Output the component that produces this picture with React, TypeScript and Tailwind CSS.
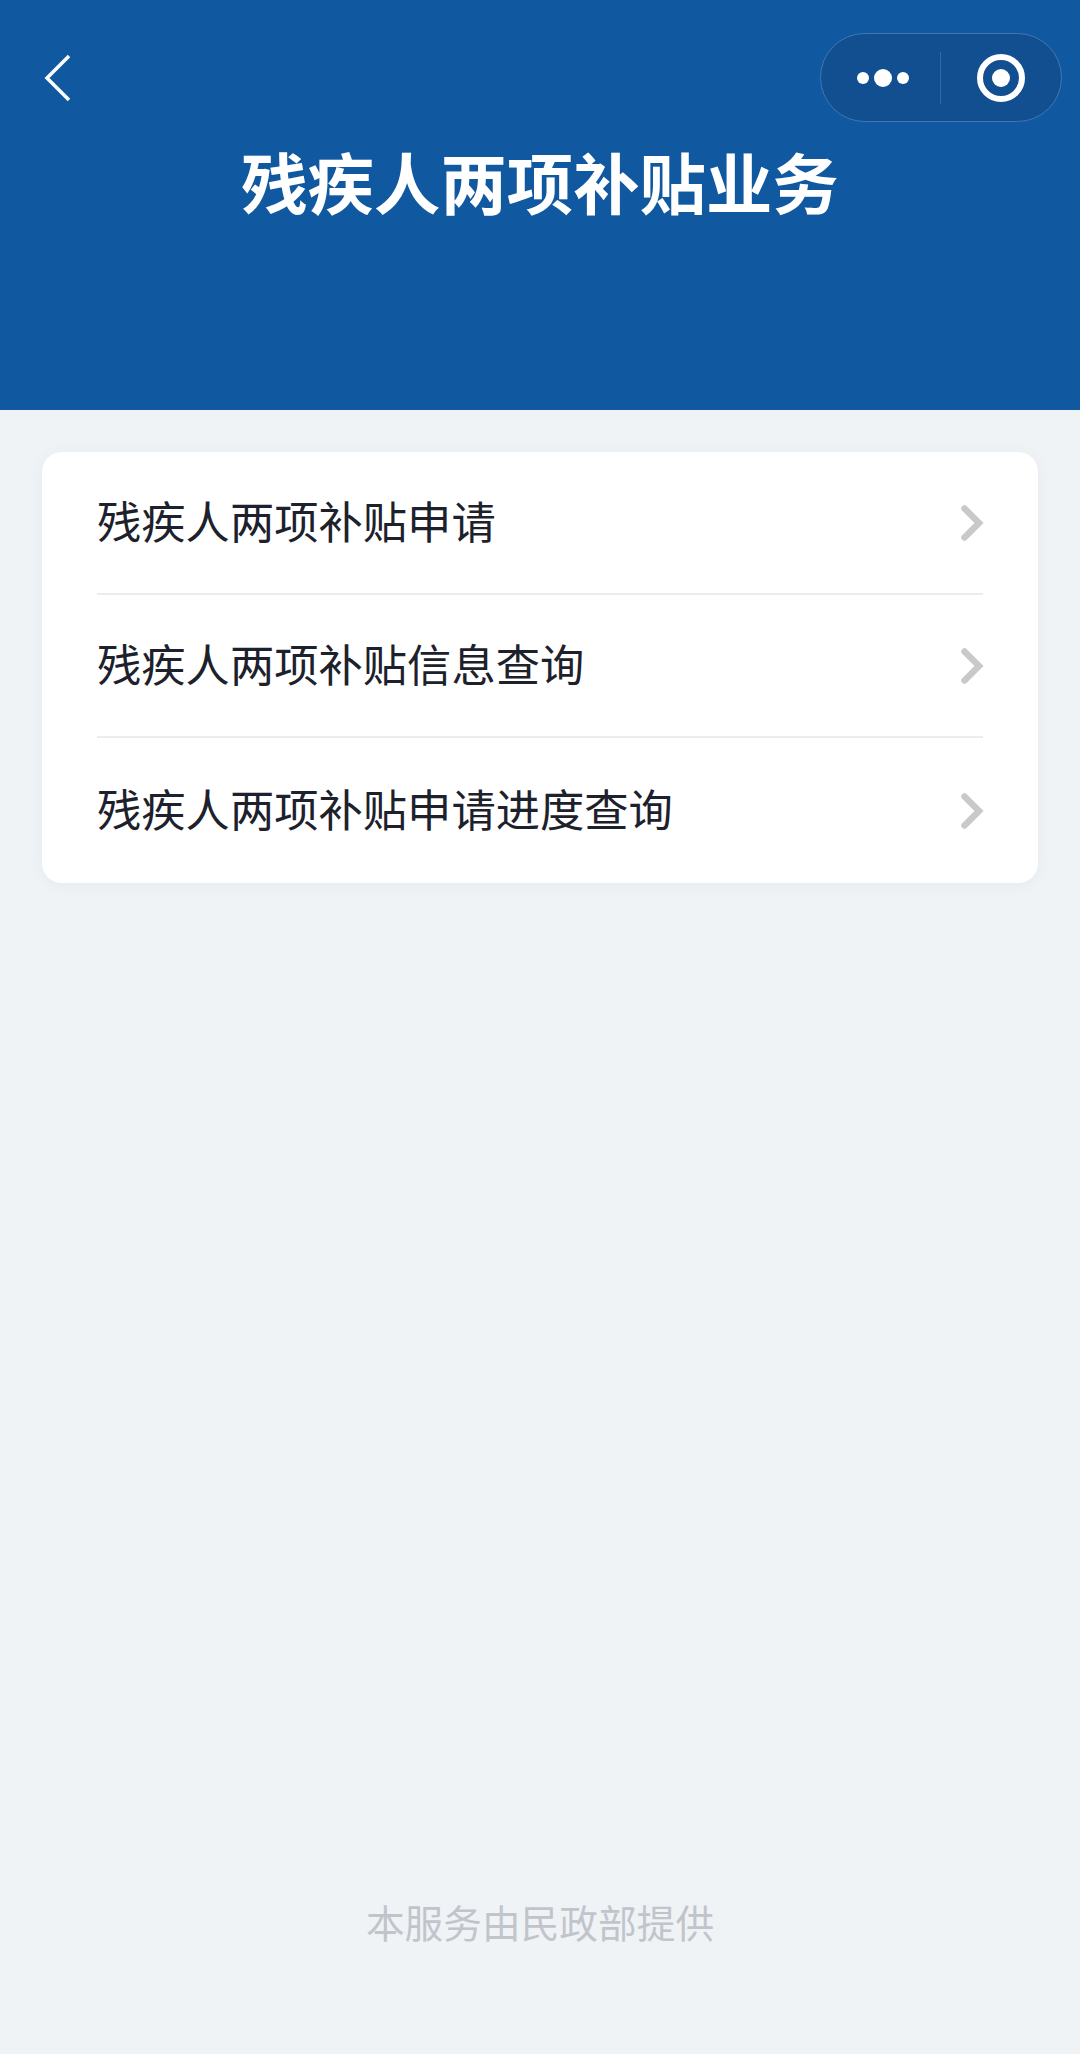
import React from 'react';

const rows = ['残疾人两项补贴申请', '残疾人两项补贴信息查询', '残疾人两项补贴申请进度查询'];

const Chevron = () => (
  <svg width="24" height="38" viewBox="0 0 24 38" fill="none" className="mr-[-1px] shrink-0">
    <path d="M4.5 4.5 L19 19 L4.5 33.5" stroke="#c8c9cb" strokeWidth="6.5" strokeLinecap="round" strokeLinejoin="miter" />
  </svg>
);

const App: React.FC = () => {
  return (
    <div className="flex h-[2054px] w-[1080px] flex-col overflow-hidden bg-[#eff3f6] font-['Noto_Sans_CJK_SC','Noto_Sans',sans-serif]">
      {/* Header */}
      <div className="h-[410px] bg-[#10589f]">
        <div className="flex items-center justify-between pl-[43px] pr-[18px] pt-[33px]">
          <svg width="30" height="50" viewBox="0 0 30 50" fill="none">
            <path d="M26 3 L4 25 L26 47" stroke="#ffffff" strokeWidth="3.5" />
          </svg>
          <div className="flex h-[89px] w-[242px] items-center rounded-full border border-[#3f78b3] bg-[#124f90]">
            <div className="flex w-[119px] items-center justify-center gap-[5px] pl-[5px]">
              <span className="h-[12px] w-[12px] rounded-full bg-white" />
              <span className="h-[18px] w-[18px] rounded-full bg-white" />
              <span className="h-[12px] w-[12px] rounded-full bg-white" />
            </div>
            <div className="h-[52px] w-px bg-[#2f6aa8]" />
            <div className="flex flex-1 items-center justify-center">
              <div className="flex h-[48px] w-[48px] items-center justify-center rounded-full border-[6px] border-white">
                <span className="h-[18px] w-[18px] rounded-full bg-white" />
              </div>
            </div>
          </div>
        </div>
        <h1 className="mt-[12px] text-center text-[66.4px] font-bold leading-[92px] text-white">残疾人两项补贴业务</h1>
      </div>

      {/* Menu card */}
      <div className="mx-[42px] mt-[42px] rounded-[20px] bg-white px-[55px] shadow-[0_2px_14px_rgba(120,140,160,0.08)]">
        {rows.map((label, i) => (
          <div
            key={label}
            className={`flex items-center justify-between ${i < rows.length - 1 ? 'h-[143px] border-b-2 border-[#ebeced]' : 'h-[145px]'}`}
          >
            <span className="mb-[6px] text-[44.3px] leading-[60px] text-[#1c212b]">{label}</span>
            <Chevron />
          </div>
        ))}
      </div>

      {/* Footer */}
      <div className="mt-auto pb-[106px] text-center text-[38.7px] leading-[54px] text-[#c1c5cb]">本服务由民政部提供</div>
    </div>
  );
};

export default App;
